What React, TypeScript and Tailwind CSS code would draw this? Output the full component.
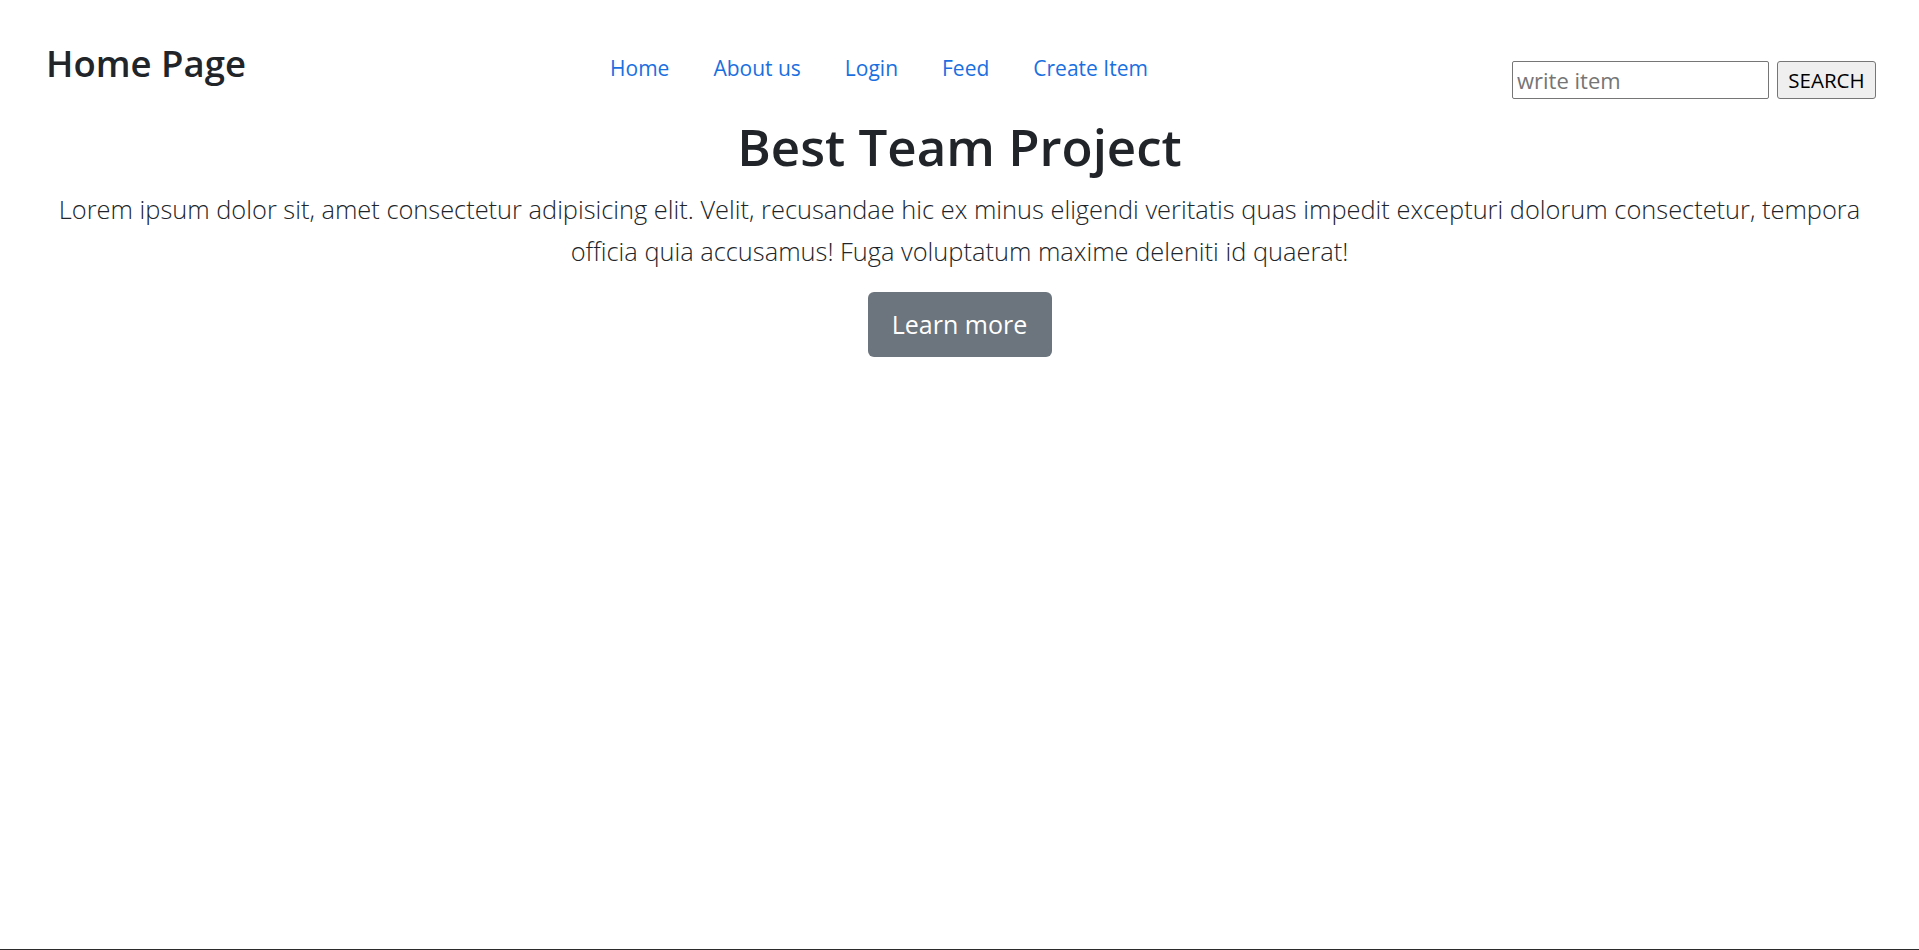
import { useState } from "react";

const links = ["Home", "About us", "Login", "Feed", "Create Item"];

export default function App() {
    const [query, setQuery] = useState("");

    return (
        <div className="min-h-[950px] flex flex-col bg-white text-[#212529] font-['Open_Sans',sans-serif]">
            {/* Navbar */}
            <header className="flex justify-between items-start pl-[46px] pr-[43px]">
                <h3 className="mt-[45px] text-[36.5px] leading-none font-semibold">Home Page</h3>
                <nav className="mt-[58px] flex gap-[44px] text-[21px] leading-none">
                    {links.map(link => (
                        <a key={link} href="#" className="text-[#1a6fe0] hover:underline">
                            {link}
                        </a>
                    ))}
                </nav>
                <form className="mt-[61px] flex gap-2" onSubmit={e => e.preventDefault()}>
                    <input
                        type="text"
                        value={query}
                        onChange={e => setQuery(e.target.value)}
                        placeholder="write item"
                        className="w-[257px] h-[38px] border border-[#767676] rounded-[2px] px-1 text-[22px] placeholder:text-[#757575] outline-none"
                    />
                    <button
                        type="submit"
                        className="w-[99px] h-[38px] bg-[#efefef] border border-[#767676] rounded-[3px] text-[20.5px] text-black"
                    >
                        SEARCH
                    </button>
                </form>
            </header>

            {/* Hero */}
            <main className="flex flex-col items-center text-center px-4">
                <h1 className="mt-[22px] text-[51px] leading-none font-semibold">Best Team Project</h1>
                <p className="mt-4 text-[25.4px] leading-[42px] font-light">
                    Lorem ipsum dolor sit, amet consectetur adipisicing elit. Velit, recusandae hic ex minus eligendi veritatis quas impedit excepturi dolorum consectetur, tempora
                    <br />
                    officia quia accusamus! Fuga voluptatum maxime deleniti id quaerat!
                </p>
                <button className="mt-5 w-[184px] h-[65px] rounded-md bg-[#6c757d] hover:bg-[#5c636a] text-white text-[25px]">
                    Learn more
                </button>
            </main>

            <div className="mt-auto h-px bg-[#2b2b2b]" />
        </div>
    );
}
